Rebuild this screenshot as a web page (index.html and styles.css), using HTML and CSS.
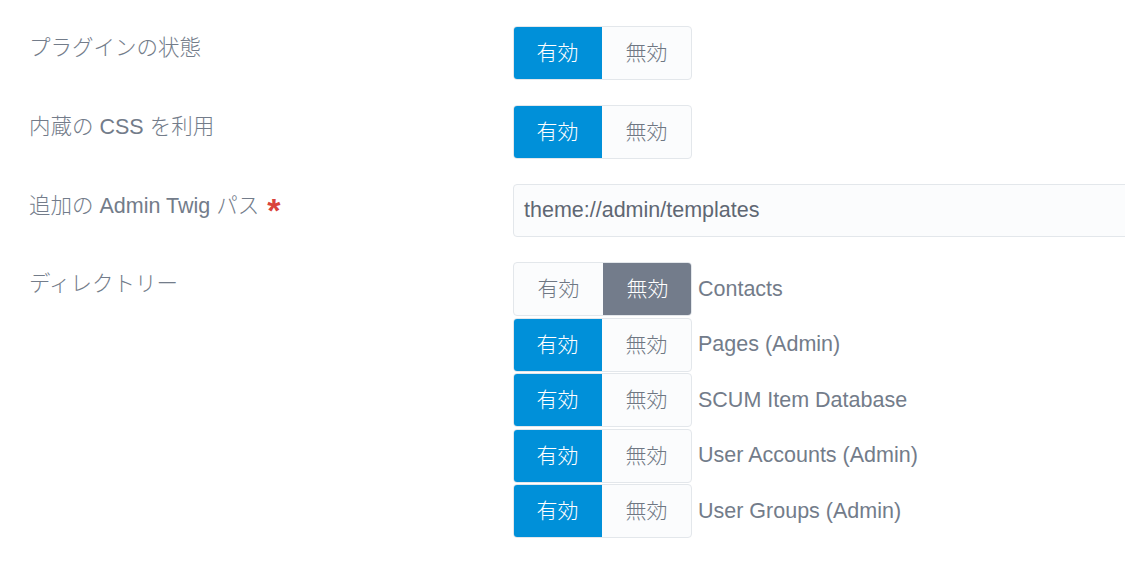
FILE: index.html
```html
<!DOCTYPE html>
<html lang="ja">
<head>
<meta charset="utf-8">
<link rel="stylesheet" href="styles.css">
</head>
<body>
<div class="form">
  <div class="row">
    <div class="label">プラグインの状態</div>
    <div class="field">
      <div class="toggle"><span class="opt on">有効</span><span class="opt">無効</span></div>
    </div>
  </div>
  <div class="row">
    <div class="label">内蔵の CSS を利用</div>
    <div class="field">
      <div class="toggle"><span class="opt on">有効</span><span class="opt">無効</span></div>
    </div>
  </div>
  <div class="row">
    <div class="label">追加の Admin Twig パス <span class="req">*</span></div>
    <div class="field">
      <div class="input">theme://admin/templates</div>
    </div>
  </div>
  <div class="row">
    <div class="label">ディレクトリー</div>
    <div class="field list">
      <div class="item"><div class="toggle"><span class="opt">有効</span><span class="opt off">無効</span></div><span class="name">Contacts</span></div>
      <div class="item"><div class="toggle"><span class="opt on">有効</span><span class="opt">無効</span></div><span class="name">Pages (Admin)</span></div>
      <div class="item"><div class="toggle"><span class="opt on">有効</span><span class="opt">無効</span></div><span class="name">SCUM Item Database</span></div>
      <div class="item"><div class="toggle"><span class="opt on">有効</span><span class="opt">無効</span></div><span class="name">User Accounts (Admin)</span></div>
      <div class="item"><div class="toggle"><span class="opt on">有効</span><span class="opt">無効</span></div><span class="name">User Groups (Admin)</span></div>
    </div>
  </div>
</div>
</body>
</html>
```
FILE: styles.css
```css
html, body {
  margin: 0;
  padding: 0;
  background: #ffffff;
  overflow: hidden;
}
body {
  width: 1125px;
  height: 586px;
  font-family: "Liberation Sans", "Noto Sans CJK JP", sans-serif;
  font-size: 21.5px;
  font-weight: 300;
  color: #737c8a;
}
.form {
  padding: 26px 0 0 29px;
  display: flex;
  flex-direction: column;
  gap: 25px;
}
.row {
  display: flex;
  align-items: flex-start;
}
.label {
  width: 484px;
  flex: none;
  line-height: 30px;
  padding-top: 7px;
}
.req {
  color: #d9433b;
  font-weight: bold;
  font-size: 34px;
  line-height: 20px;
  vertical-align: -9px;
  margin-left: 2px;
}
.field {
  flex: 1;
  min-width: 0;
}
.toggle {
  display: inline-flex;
  height: 54px;
  box-sizing: border-box;
  border: 1px solid #e3e7eb;
  border-radius: 4px;
  background: #fbfcfd;
  overflow: hidden;
  flex: none;
}
.opt {
  width: 89px;
  display: flex;
  align-items: center;
  justify-content: center;
  color: #6f7783;
  font-size: 21px;
  padding-bottom: 4px;
  box-sizing: border-box;
}
.opt.on {
  background: #0090d9;
  color: #ffffff;
  margin: -1px 0 -1px -1px;
}
.opt.off {
  background: #737c8b;
  color: #ffffff;
  margin: -1px -1px -1px 0;
}
.input {
  width: 640px;
  height: 53px;
  box-sizing: border-box;
  border: 1px solid #e3e7eb;
  border-radius: 4px;
  background: #fbfcfd;
  padding-left: 10px;
  display: flex;
  align-items: center;
  color: #5f6773;
}
.list {
  display: flex;
  flex-direction: column;
  gap: 1.5px;
}
.item {
  display: flex;
  align-items: center;
  gap: 6px;
}
.name {
  color: #737c8a;
}
```
